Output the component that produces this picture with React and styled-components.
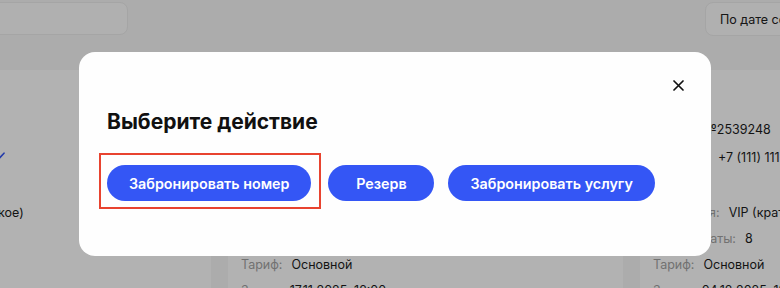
import React from "react"
import styled, { createGlobalStyle } from "styled-components"

const GlobalStyle = createGlobalStyle`
  html, body {
    margin: 0;
    padding: 0;
    background: #f7f7f7;
    font-family: Inter, "Noto Sans", "Liberation Sans", sans-serif;
    overflow: hidden;
  }
  * { box-sizing: border-box; }
`

const Page = styled.div`
  width: 780px;
  height: 288px;
  overflow: hidden;
  position: relative;
`

const Header = styled.div`
  display: flex;
  justify-content: space-between;
  align-items: flex-start;
  padding-top: 2px;
  height: 70px;
`

const SearchInput = styled.div`
  width: 142px;
  height: 33px;
  margin-left: -14px;
  background: #fcfcfc;
  border: 1px solid #ececec;
  border-radius: 8px;
`

const SortButton = styled.div`
  height: 34px;
  margin-right: -64px;
  padding: 0 14px;
  display: flex;
  align-items: center;
  background: #fcfcfc;
  border: 1px solid #ececec;
  border-radius: 8px;
  font-size: 12.5px;
  color: #222;
  white-space: nowrap;
`

const CardsRow = styled.div`
  display: grid;
  grid-template-columns: repeat(3, 395px);
  column-gap: 17px;
  margin-left: -184px;
  width: 1219px;
`

const Card = styled.div`
  height: 260px;
  background: #fff;
  border-radius: 12px;
  padding: 46px 13px 0;
  display: flex;
  flex-direction: column;
  gap: 29px;
`

const Section = styled.div`
  display: flex;
  flex-direction: column;
  gap: ${p => p.$gap || 0}px;
`

const Row = styled.div`
  display: flex;
  align-items: center;
  gap: 9px;
  height: 26px;
  font-size: 12.5px;
  white-space: nowrap;
`

const Label = styled.span`
  color: #a3a3a3;
`

const Value = styled.span`
  color: #1c1c1c;
  display: flex;
  align-items: center;
  gap: 5px;
`

const Overlay = styled.div`
  position: absolute;
  inset: 0;
  background: rgba(0, 0, 0, 0.3);
  display: flex;
  justify-content: center;
  align-items: flex-start;
  padding: 52px 0 0 10px;
`

const Modal = styled.div`
  position: relative;
  width: 632px;
  height: 204px;
  background: #fefefe;
  border-radius: 16px;
  padding: 56px 28px 0;
`

const CloseButton = styled.button`
  position: absolute;
  top: 21px;
  right: 21px;
  width: 24px;
  height: 24px;
  padding: 0;
  border: none;
  background: none;
  display: flex;
  align-items: center;
  justify-content: center;
  color: #111;
`

const Title = styled.h2`
  margin: 0;
  font-size: 21px;
  line-height: 28px;
  font-weight: 700;
  color: #111;
`

const Actions = styled.div`
  display: flex;
  align-items: center;
  gap: 14px;
  margin-top: 17px;
  margin-left: -8px;
`

const Highlight = styled.div`
  border: 2px solid #e8432f;
  padding: 10px 8px 6px 6px;
  margin-right: -7px;
`

const ActionButton = styled.button`
  height: 36px;
  min-width: 106px;
  padding: 0 22px;
  border: none;
  border-radius: 18px;
  background: #3456f5;
  color: #fff;
  font-family: inherit;
  font-size: 14.3px;
  font-weight: 600;
  white-space: nowrap;
  margin-top: ${p => (p.$shift ? "4px" : "0")};
`

const CheckIcon = () => (
  <svg width="12" height="10" viewBox="0 0 12 10" fill="none">
    <path d="M1 5.5 L4.2 8.5 L11 1.2" stroke="#3456f5" strokeWidth="1.6" strokeLinecap="round" strokeLinejoin="round" />
  </svg>
)

const bookings = [
  { id: "2539241", phone: "+7 (111) 111-11-11", checked: true, category: "Стандарт (краткое)", count: 2, date: "10.11.2025, 12:00" },
  { id: "2539245", phone: "+7 (111) 111-11-11", checked: false, category: "Люкс (длительное)", count: 4, date: "17.11.2025, 12:00" },
  { id: "2539248", phone: "+7 (111) 111-11-11", checked: false, category: "VIP (краткосрочное)", count: 8, date: "04.12.2025, 12:00" },
]

const BookingCard = ({ b }) => (
  <Card>
    <Section $gap={2}>
      <Row>
        <Label>Бронь:</Label>
        <Value>№{b.id}</Value>
      </Row>
      <Row>
        <Label>Телефон:</Label>
        <Value>
          {b.phone}
          {b.checked && <CheckIcon />}
        </Value>
      </Row>
    </Section>
    <Section>
      <Row>
        <Label>Категория:</Label>
        <Value>{b.category}</Value>
      </Row>
      <Row>
        <Label>Все комнаты:</Label>
        <Value>{b.count}</Value>
      </Row>
      <Row>
        <Label>Тариф:</Label>
        <Value>Основной</Value>
      </Row>
      <Row>
        <Label>Заезд:</Label>
        <Value>{b.date}</Value>
      </Row>
    </Section>
  </Card>
)

const App = () => {
  return (
    <Page>
      <GlobalStyle />
      <Header>
        <SearchInput />
        <SortButton>По дате создания</SortButton>
      </Header>
      <CardsRow>
        {bookings.map(b => (
          <BookingCard key={b.id} b={b} />
        ))}
      </CardsRow>
      <Overlay>
        <Modal>
          <CloseButton aria-label="Закрыть">
            <svg width="11" height="11" viewBox="0 0 11 11">
              <path d="M1 1 L10 10 M10 1 L1 10" stroke="#111" strokeWidth="1.7" strokeLinecap="round" />
            </svg>
          </CloseButton>
          <Title>Выберите действие</Title>
          <Actions>
            <Highlight>
              <ActionButton>Забронировать номер</ActionButton>
            </Highlight>
            <ActionButton $shift>Резерв</ActionButton>
            <ActionButton $shift>Забронировать услугу</ActionButton>
          </Actions>
        </Modal>
      </Overlay>
    </Page>
  )
}

export default App
